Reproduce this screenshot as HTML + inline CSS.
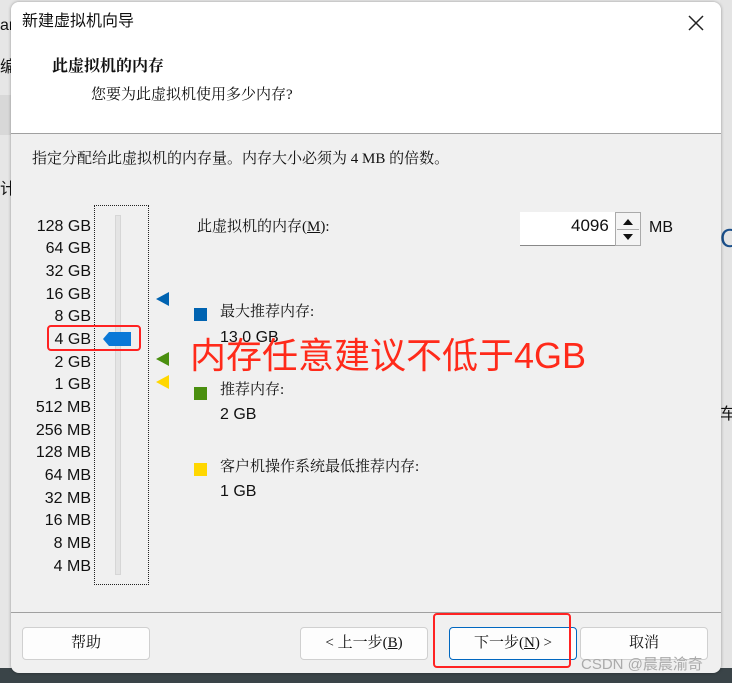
<!DOCTYPE html>
<html><head><meta charset="utf-8"><style>
*{margin:0;padding:0;box-sizing:border-box}
body{width:732px;height:683px;overflow:hidden;position:relative;background:#e9e9e9;font-family:"Liberation Sans","Noto Sans CJK SC",sans-serif;font-size:15px;color:#111}
.abs{position:absolute}
.dlg{left:11px;top:2px;width:710px;height:671px;background:#f0f0f0;border-radius:8px;overflow:hidden;box-shadow:0 0 3px rgba(0,0,0,.35)}
.hdr{left:0;top:0;width:710px;height:132px;background:#fff;border-bottom:1px solid #a0a0a0}
.t{white-space:nowrap;line-height:1}
.serif{font-family:"Liberation Serif","Noto Serif CJK SC","Noto Sans CJK SC",serif}
.lbl{right:630px;width:80px;text-align:right;font-size:16px}
.btn{height:33px;border:1px solid #d0d0d0;border-radius:4px;background:#fdfdfd;text-align:center;line-height:31px;font-size:15px}
.sq{width:13px;height:13px}
</style></head><body>
<div class="abs" style="left:0;top:0;width:20px;height:683px;background:#e6e6e6"></div>
<div class="abs" style="left:0;top:95px;width:20px;height:40px;background:#d8d8d8"></div>
<div class="abs t" style="left:0;top:18px;font-size:16px">ar</div>
<div class="abs t" style="left:0;top:60px;font-size:16px">编</div>
<div class="abs t" style="left:0;top:182px;font-size:16px">计</div>
<div class="abs" style="left:720px;top:0;width:12px;height:683px;background:#e4e4e4"></div>
<div class="abs t" style="left:720px;top:225px;font-size:26px;color:#1a4f8a">C</div>
<div class="abs t" style="left:720px;top:407px;font-size:16px">车</div>
<div class="abs" style="left:0;top:668px;width:732px;height:15px;background:#3a4448"></div>
<div class="abs dlg">
 <div class="abs hdr"></div>
 <div class="abs t" style="left:11px;top:12px;font-size:16px">新建虚拟机向导</div>
 <svg class="abs" style="left:676px;top:12px" width="18" height="18"><path d="M2 2L16 16M16 2L2 16" stroke="#222" stroke-width="1.5"/></svg>
 <div class="abs t serif" style="left:41px;top:57px;font-size:16px;font-weight:bold">此虚拟机的内存</div>
 <div class="abs t serif" style="left:80px;top:86px;font-size:15px">您要为此虚拟机使用多少内存?</div>
 <div class="abs t serif" style="left:21px;top:150px;font-size:15px">指定分配给此虚拟机的内存量。内存大小必须为 4 MB 的倍数。</div>
 <!-- slider -->
 <div class="abs" style="left:83px;top:203px;width:55px;height:380px;border:1px dotted #222"></div>
 <div class="abs" style="left:104px;top:213px;width:6px;height:360px;background:#e4e4e4;border:1px solid #d6d6d6"></div>
 <div class="abs t lbl" style="top:217px">128 GB</div>
 <div class="abs t lbl" style="top:239px">64 GB</div>
 <div class="abs t lbl" style="top:262px">32 GB</div>
 <div class="abs t lbl" style="top:285px">16 GB</div>
 <div class="abs t lbl" style="top:307px">8 GB</div>
 <div class="abs t lbl" style="top:330px">4 GB</div>
 <div class="abs t lbl" style="top:353px">2 GB</div>
 <div class="abs t lbl" style="top:375px">1 GB</div>
 <div class="abs t lbl" style="top:398px">512 MB</div>
 <div class="abs t lbl" style="top:421px">256 MB</div>
 <div class="abs t lbl" style="top:443px">128 MB</div>
 <div class="abs t lbl" style="top:466px">64 MB</div>
 <div class="abs t lbl" style="top:489px">32 MB</div>
 <div class="abs t lbl" style="top:511px">16 MB</div>
 <div class="abs t lbl" style="top:534px">8 MB</div>
 <div class="abs t lbl" style="top:557px">4 MB</div>
 <svg class="abs" style="left:92px;top:328px" width="30" height="18"><path d="M0 9L6 2H28V16H6Z" fill="#0a78d7"/></svg>
 <div class="abs" style="left:36px;top:323px;width:94px;height:26px;border:2px solid #f22;border-radius:4px"></div>
 <svg class="abs" style="left:145px;top:290px" width="14" height="14"><path d="M0 7L13 0V14Z" fill="#0063b1"/></svg>
 <svg class="abs" style="left:145px;top:350px" width="14" height="14"><path d="M0 7L13 0V14Z" fill="#4a8f0f"/></svg>
 <svg class="abs" style="left:145px;top:373px" width="14" height="14"><path d="M0 7L13 0V14Z" fill="#ffd700"/></svg>
 <div class="abs t serif" style="left:186px;top:218px">此虚拟机的内存(<u>M</u>):</div>
 <div class="abs" style="left:509px;top:210px;width:96px;height:34px;background:#fff;border-bottom:1px solid #888"></div>
 <div class="abs t" style="left:560px;top:215px;font-size:17px">4096</div>
 <div class="abs" style="left:604px;top:210px;width:26px;height:34px;border:1px solid #aaa;background:#f4f4f4"></div>
 <div class="abs" style="left:606px;top:227px;width:22px;height:1px;background:#aaa"></div>
 <svg class="abs" style="left:611px;top:216px" width="12" height="8"><path d="M1 7L6 1L11 7Z" fill="#111"/></svg>
 <svg class="abs" style="left:611px;top:231px" width="12" height="8"><path d="M1 1L6 7L11 1Z" fill="#111"/></svg>
 <div class="abs t" style="left:638px;top:218px;font-size:16px">MB</div>
 <div class="abs sq" style="left:183px;top:306px;background:#0063b1"></div>
 <div class="abs t serif" style="left:209px;top:303px">最大推荐内存:</div>
 <div class="abs t" style="left:209px;top:328px;font-size:16px">13.0 GB</div>
 <div class="abs sq" style="left:183px;top:385px;background:#4a8f0f"></div>
 <div class="abs t serif" style="left:209px;top:381px">推荐内存:</div>
 <div class="abs t" style="left:209px;top:405px;font-size:16px">2 GB</div>
 <div class="abs sq" style="left:183px;top:461px;background:#ffd700"></div>
 <div class="abs t serif" style="left:209px;top:458px">客户机操作系统最低推荐内存:</div>
 <div class="abs t" style="left:209px;top:482px;font-size:16px">1 GB</div>
 <div class="abs t" style="left:179px;top:336px;font-size:36px;color:#ff2a1a">内存任意建议不低于4GB</div>
 <div class="abs" style="left:0;top:610px;width:710px;height:1px;background:#a0a0a0"></div>
 <div class="abs btn serif" style="left:11px;top:625px;width:128px">帮助</div>
 <div class="abs btn serif" style="left:289px;top:625px;width:128px">&lt; 上一步(<u>B</u>)</div>
 <div class="abs btn serif" style="left:438px;top:625px;width:128px;border-color:#0067c0">下一步(<u>N</u>) &gt;</div>
 <div class="abs" style="left:422px;top:611px;width:138px;height:55px;border:2px solid #f22;border-radius:4px"></div>
 <div class="abs btn serif" style="left:569px;top:625px;width:128px">取消</div>
 <div class="abs t" style="left:570px;top:655px;font-size:15px;color:#aaa">CSDN @晨晨渝奇</div>
</div>
</body></html>
